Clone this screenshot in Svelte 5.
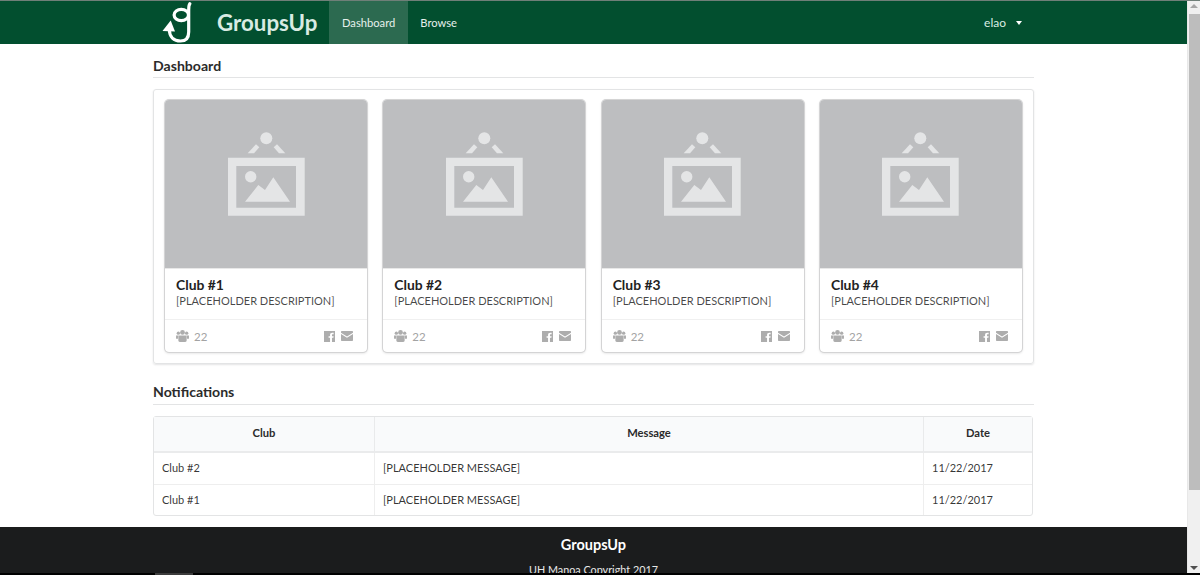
<script lang="ts">
  const clubs = ['Club #1', 'Club #2', 'Club #3', 'Club #4']
  const rows = [
    { club: 'Club #2', message: '[PLACEHOLDER MESSAGE]', date: '11/22/2017' },
    { club: 'Club #1', message: '[PLACEHOLDER MESSAGE]', date: '11/22/2017' },
  ]
</script>

<div class="window">
  <div class="page">
    <nav class="navbar">
      <div class="nav-inner">
        <a class="brand" href="#top">
          <!-- g with a looping arrow for a tail -->
          <svg class="logo" viewBox="0 0 34 42" width="34" height="42" aria-hidden="true">
            <g fill="none" stroke="#fff" stroke-linecap="round" stroke-width="3.200">
              <ellipse cx="21.300" cy="13" rx="7.200" ry="5.600" />
              <path d="M29.800 1.800C28.900 3 28.700 5 28.700 8V30C28.700 36 25.500 39 20.500 39 14 39 9.300 35 9.300 27" />
            </g>
            <path d="M10.700 18.500 2.500 29 15 29.500Z" fill="#fff" />
          </svg>
          <span class="brand-name">GroupsUp</span>
        </a>
        <a class="nav-item active" href="#top">Dashboard</a>
        <a class="nav-item" href="#top">Browse</a>
        <div class="user">
          <span>elao</span>
          <i class="caret"></i>
        </div>
      </div>
    </nav>

    <main class="content">
      <h3 class="heading">Dashboard</h3>
      <section class="segment">
        {#each clubs as club}
          <article class="card">
            <div class="thumb">
              <svg viewBox="0 0 77 84" width="77" height="84" aria-hidden="true">
                <g fill="#e4e5e6">
                  <circle cx="38.300" cy="6.300" r="6" />
                  <path d="M19.700 21.300 28 12.300 31.300 15.300 26 21.300Z" />
                  <path d="M57.300 21.300 49 12.300 45.700 15.300 51 21.300Z" />
                  <path fill-rule="evenodd" d="M0 25.700H76.700V83.700H0ZM8.300 34V75.700H68V34Z" />
                  <circle cx="22.700" cy="44.700" r="5.700" />
                  <path d="M17 69.700 30.300 53 37 58 45.300 45.300 62 69.700Z" />
                </g>
              </svg>
            </div>
            <div class="card-body">
              <div class="card-title">{club}</div>
              <div class="card-desc">[PLACEHOLDER DESCRIPTION]</div>
            </div>
            <div class="card-extra">
              <svg viewBox="0 0 14 13" width="13" height="12" aria-hidden="true">
                <g fill="#adadad">
                  <circle cx="2.500" cy="3.400" r="1.800" />
                  <circle cx="11.500" cy="3.400" r="1.800" />
                  <circle cx="7" cy="2.600" r="2.600" />
                  <path d="M0 6h3c-.6.800-.9 1.700-.9 3.400H0ZM14 6h-3c.6.800.9 1.700.9 3.400H14Z" />
                  <path d="M3.800 6h6.400c.9 0 1.300.5 1.300 1.300V11.500c0 .9-.6 1.500-1.500 1.500H4c-.9 0-1.500-.6-1.500-1.500V7.300C2.500 6.500 2.900 6 3.800 6Z" />
                </g>
              </svg>
              <span class="count">22</span>
              <span class="spacer"></span>
              <svg viewBox="0 0 12 12" width="11" height="11" aria-hidden="true">
                <path fill="#adadad" d="M0 0h12v12H8.700V7.400h1.500l.3-1.800H8.700V4.500c0-.5.200-.9.900-.9h.9V2H9.100C7.500 2 6.600 3 6.600 4.400v1.200H5v1.800h1.600V12H0Z" />
              </svg>
              <svg class="mail" viewBox="0 0 12 10" width="12" height="10" aria-hidden="true">
                <path fill="#adadad" d="M1 0h10c.6 0 1 .4 1 1v.7L6 5.500 0 1.700V1c0-.6.4-1 1-1ZM0 3l6 3.800L12 3v6c0 .6-.4 1-1 1H1c-.6 0-1-.4-1-1Z" />
              </svg>
            </div>
          </article>
        {/each}
      </section>

      <h3 class="heading notif">Notifications</h3>
      <table class="table">
        <thead>
          <tr>
            <th class="col-club">Club</th>
            <th>Message</th>
            <th class="col-date">Date</th>
          </tr>
        </thead>
        <tbody>
          {#each rows as row}
            <tr>
              <td>{row.club}</td>
              <td>{row.message}</td>
              <td>{row.date}</td>
            </tr>
          {/each}
        </tbody>
      </table>
    </main>

    <footer class="footer">
      <div class="footer-title">GroupsUp</div>
      <div class="footer-sub">UH Manoa Copyright 2017</div>
    </footer>
  </div>

  <aside class="scrollbar">
    <span class="arrow up"></span>
    <span class="thumb-bar"></span>
    <span class="rest"></span>
    <span class="arrow down"></span>
  </aside>
</div>
<div class="taskbar"><span class="task"></span></div>

<style>
  :global(body) {
    margin: 0;
    background: #fff;
    overflow: hidden;
  }

  .window {
    display: flex;
    height: 573px;
    box-sizing: border-box;
    overflow: hidden;
    border-top: 1px solid #6f7f78;
    font-family: Lato, 'Helvetica Neue', Arial, sans-serif;
    font-size: 11.2px;
    color: rgba(0, 0, 0, 0.87);
  }

  .taskbar {
    height: 2px;
    padding-left: 155px;
    background: #000;
  }

  .task {
    display: block;
    width: 38px;
    height: 2px;
    background: #3c3c3c;
  }

  .page {
    flex: 1;
    min-width: 0;
    overflow: hidden;
  }

  .navbar {
    height: 43px;
    background: #024f2f;
  }

  .nav-inner {
    display: flex;
    align-items: stretch;
    height: 43px;
    width: 881px;
    margin-left: 153px;
  }

  .brand {
    display: flex;
    align-items: center;
    width: 176px;
    padding-left: 7px;
    box-sizing: border-box;
    text-decoration: none;
  }

  .logo {
    flex: none;
  }

  .brand-name {
    margin-left: 23px;
    font-size: 22.300px;
    font-weight: 700;
    color: #d9ebe3;
    white-space: nowrap;
  }

  .nav-item {
    display: flex;
    align-items: center;
    padding: 0 13px;
    color: #e6f0ec;
    font-size: 11.200px;
    text-decoration: none;
  }

  .nav-item.active {
    background: #2c6a50;
  }

  .nav-item:last-of-type {
    padding-left: 12px;
  }

  .user {
    display: flex;
    align-items: center;
    margin-left: auto;
    padding-right: 12px;
    color: #d9ebe3;
    font-size: 12px;
  }

  .caret {
    width: 0;
    height: 0;
    margin-left: 10px;
    border: 3px solid transparent;
    border-top: 4px solid #fff;
    border-bottom: 0;
  }

  .content {
    width: 881px;
    margin-left: 153px;
    height: 483px;
    padding-top: 13px;
    box-sizing: border-box;
  }

  .heading {
    margin: 0 0 11px;
    padding-bottom: 3px;
    border-bottom: 1px solid #e3e4e5;
    font-size: 14.100px;
    font-weight: 700;
    line-height: 17px;
    color: #2b2b2b;
  }

  .heading.notif {
    margin-top: 19px;
    padding-bottom: 4px;
  }

  .segment {
    display: flex;
    gap: 16.330px;
    padding: 10px 0 11px 11px;
    border: 1px solid #e3e4e5;
    border-radius: 3px;
    box-shadow: 0 1px 2px rgba(34, 36, 38, 0.12);
    box-sizing: border-box;
    height: 275px;
  }

  .card {
    display: flex;
    flex-direction: column;
    width: 202px;
    flex: none;
    border-radius: 4px;
    box-shadow: 0 1px 3px 0 #d4d4d5, 0 0 0 1px #d4d4d5;
  }

  .thumb {
    display: flex;
    justify-content: center;
    align-items: flex-start;
    height: 168px;
    padding-top: 32px;
    box-sizing: border-box;
    background: #bdbec0;
    border-radius: 4px 4px 0 0;
  }

  .card-body {
    padding: 7px 11px 10px;
    border-top: 1px solid #e8e8e8;
  }

  .card-title {
    font-size: 13.900px;
    font-weight: 700;
    line-height: 17px;
    color: #222;
  }

  .card-desc {
    font-size: 11px;
    line-height: 15px;
    color: rgba(0, 0, 0, 0.72);
  }

  .card-extra {
    display: flex;
    align-items: center;
    gap: 5px;
    margin-top: auto;
    height: 32px;
    padding: 0 14px 0 11px;
    border-top: 1px solid #f0f0f0;
  }

  .mail {
    margin-left: 1px;
  }

  .count {
    color: #a3a3a3;
    font-size: 11.500px;
  }

  .spacer {
    flex: 1;
  }

  .table {
    width: 880px;
    border-collapse: separate;
    border-spacing: 0;
    border: 1px solid #e3e4e5;
    border-radius: 3px;
    table-layout: fixed;
    font-size: 11px;
  }

  .table th {
    box-sizing: border-box;
    height: 36px;
    padding: 0 0 3px;
    background: #f9fafb;
    border-bottom: 2px solid #eaebec;
    border-left: 1px solid #e9eaeb;
    font-size: 11.200px;
    font-weight: 700;
    color: #2b2b2b;
    text-align: center;
  }

  .table td {
    box-sizing: border-box;
    height: 30px;
    padding: 0 8px 1px;
    border-left: 1px solid #eeeeee;
    color: rgba(0, 0, 0, 0.8);
  }

  .table tbody tr:first-child td {
    height: 32px;
    padding-bottom: 2px;
    border-bottom: 1px solid #eeeeee;
  }

  .table th:first-child,
  .table td:first-child {
    border-left: 0;
  }

  .col-club {
    width: 220px;
  }

  .col-date {
    width: 109px;
  }

  .footer {
    height: 100px;
    background: #1b1c1d;
    text-align: center;
    color: #fff;
    padding-top: 9px;
    box-sizing: border-box;
  }

  .footer-title {
    font-size: 14.500px;
    font-weight: 700;
    line-height: 18px;
  }

  .footer-sub {
    margin-top: 8px;
    font-size: 10.800px;
    line-height: 15px;
    color: #e8e8e8;
  }

  .scrollbar {
    display: flex;
    flex-direction: column;
    flex: none;
    width: 13px;
    background: #f0f0f0;
    border-left: 1px solid #e8e8e8;
    box-sizing: border-box;
  }

  .arrow {
    flex: none;
    height: 13px;
    position: relative;
  }

  .arrow::after {
    content: '';
    position: absolute;
    left: 2px;
    top: 6px;
    border: 4px solid transparent;
  }

  .arrow.up::after {
    top: 3px;
    border-bottom: 4px solid #a6a6a6;
    border-top: 0;
  }

  .arrow.down::after {
    border-top: 4px solid #505050;
    border-bottom: 0;
  }

  .thumb-bar {
    flex: none;
    height: 476px;
    margin-left: 1px;
    background: #bdbdbd;
  }

  .rest {
    flex: 1;
  }
</style>
